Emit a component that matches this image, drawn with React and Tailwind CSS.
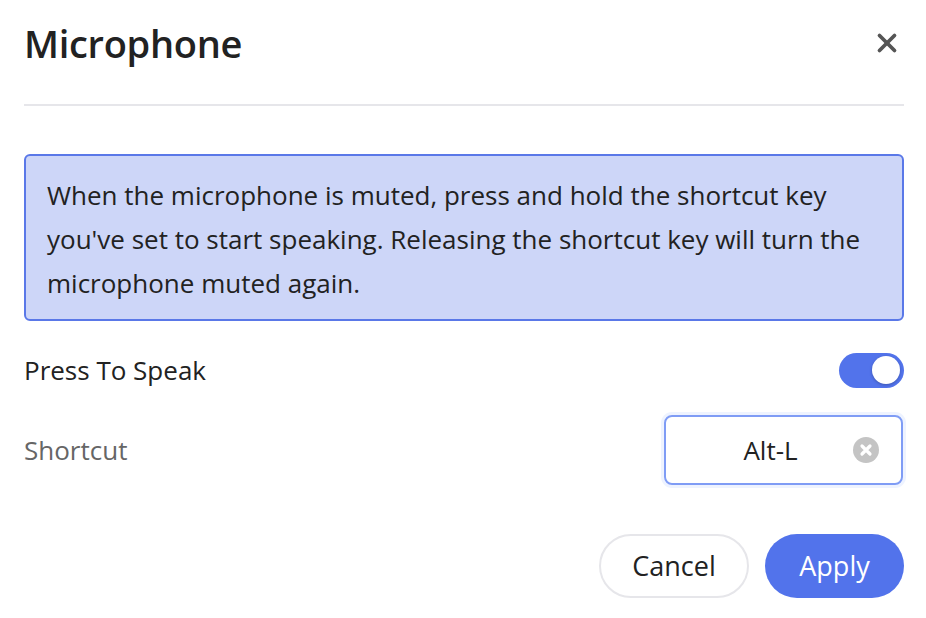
import { X } from 'lucide-react';

function Toggle() {
  return (
    <div className="w-[65px] h-[35px] rounded-full bg-[#5273eb] flex items-center justify-end pr-[4px]">
      <div className="w-[28px] h-[28px] rounded-full bg-white shadow-[0_1px_3px_rgba(0,0,0,0.25)]"></div>
    </div>
  );
}

function ClearIcon() {
  return (
    <svg width="26" height="26" viewBox="0 0 26 26">
      <circle cx="13" cy="13" r="13" fill="#c4c4c4" />
      <path d="M9 9 L17 17 M17 9 L9 17" stroke="#fff" strokeWidth="3.2" strokeLinecap="round" />
    </svg>
  );
}

export default function App() {
  return (
    <div
      className="w-[926px] h-[618px] bg-white pl-6 pr-[22px] text-[#222]"
      style={{ fontFamily: '"Open Sans", "Noto Sans", sans-serif' }}
    >
      <div className="h-[86px] flex items-center justify-between">
        <h1 className="text-[38px] font-semibold text-[#222] tracking-[-0.3px]">Microphone</h1>
        <button className="mr-[2px] text-[#555]">
          <X size={30} strokeWidth={3} />
        </button>
      </div>
      <div className="mt-[18px] border-t-2 border-[#e6e6ea]"></div>

      <div className="mt-[48px] rounded-[6px] border-2 border-[#5a78e8] bg-[#cdd6f8] pl-[21px] pr-4 pt-[17px] pb-[14px] text-[26px] leading-[44px] text-[#222]">
        When the microphone is muted, press and hold the shortcut key you've set to start speaking. Releasing the shortcut key will turn the microphone muted again.
      </div>

      <div className="mt-[31px] h-[36px] flex items-center justify-between">
        <span className="text-[26px] text-[#222]">Press To Speak</span>
        <Toggle />
      </div>

      <div className="mt-[27px] flex items-center justify-between">
        <span className="text-[26px] text-[#666]">Shortcut</span>
        <div className="w-[239px] h-[70px] mr-[1px] rounded-[8px] border-2 border-[#7f9cf5] ring-[3px] ring-[#eef3ff] flex items-center pl-4 pr-[22px]">
          <span className="flex-1 text-center text-[26px] text-[#222] pl-[6px]">Alt-L</span>
          <ClearIcon />
        </div>
      </div>

      <div className="mt-[49px] flex justify-end gap-4">
        <button className="w-[150px] h-[64px] rounded-full border-2 border-[#e6e6ea] text-[27px] text-[#222] bg-white">
          Cancel
        </button>
        <button className="w-[139px] h-[64px] rounded-full bg-[#5273eb] text-[27px] text-white">
          Apply
        </button>
      </div>
    </div>
  );
}
